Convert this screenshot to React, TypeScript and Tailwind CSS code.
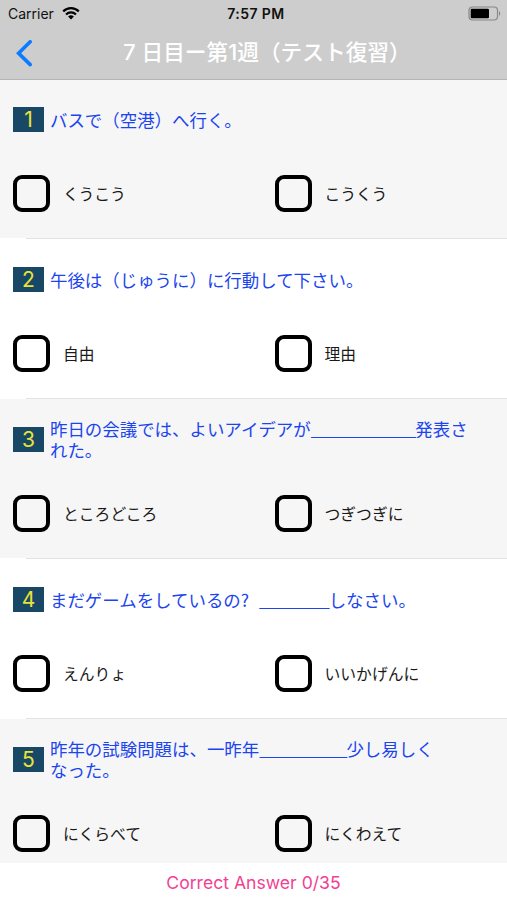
import { Fragment, useState } from "react";

interface Question {
  id: number;
  parts: string[];
  blank?: string;
  options: string[];
}

// questions for week 1, day 7

const questions: Question[] = [
  {
    id: 1,
    parts: ["バスで（空港）へ行く。"],
    options: ["くうこう", "こうくう"],
  },
  {
    id: 2,
    parts: ["午後は（じゅうに）に行動して下さい。"],
    options: ["自由", "理由"],
  },
  {
    id: 3,
    parts: ["昨日の会議では、よいアイデアが", "発表さ\nれた。"],
    blank: "____________",
    options: ["ところどころ", "つぎつぎに"],
  },
  {
    id: 4,
    parts: ["まだゲームをしているの? ", "しなさい。"],
    blank: "________",
    options: ["えんりょ", "いいかげんに"],
  },
  {
    id: 5,
    parts: ["昨年の試験問題は、一昨年", "少し易しく\nなった。"],
    blank: "__________",
    options: ["にくらべて", "にくわえて"],
  },
];

export default function App() {
  const [selected, setSelected] = useState<Record<number, number>>({});

  return (
    <div className="flex h-[900px] w-[507px] flex-col overflow-hidden bg-white font-['Inter','Noto_Sans_CJK_JP',sans-serif]">
      <Header />
      <main className="-mt-px h-[784px] shrink-0 overflow-hidden">
        {questions.map((question) => (
          <QuestionRow
            key={question.id}
            question={question}
            selected={selected[question.id]}
            onSelect={(index) =>
              setSelected({ ...selected, [question.id]: index })
            }
          />
        ))}
      </main>
      <footer className="flex h-[37px] items-center justify-center pt-1 text-[17.6px] text-[#f23f93]">
        Correct Answer 0/35
      </footer>
    </div>
  );
}

const Header = () => {
  return (
    <header className="relative z-10 h-20 shrink-0 border-b border-[#b4b4b4] bg-[#cdcdcd]">
      {/* status bar */}
      <div className="grid h-[27px] grid-cols-3 items-center pr-[6px] pl-2 text-[14px] text-[#111]">
        <div className="flex items-center gap-2">
          <span>Carrier</span>
          <svg width="18" height="13" viewBox="0 0 18 13" fill="none">
            <path d="M1.2 4.4a11 11 0 0 1 15.6 0" stroke="#000" strokeWidth="2.2" />
            <path d="M4 7.4a7.1 7.1 0 0 1 10 0" stroke="#000" strokeWidth="2.1" />
            <path d="M9 12.6 6.1 9.6a4.1 4.1 0 0 1 5.8 0Z" fill="#000" />
          </svg>
        </div>
        <span className="pl-[3px] text-center font-semibold tracking-[0.03em]">
          7:57 PM
        </span>
        <div className="flex items-center justify-end">
          <svg width="33" height="15" viewBox="0 0 33 15">
            <rect x="1" y="1" width="28.5" height="13" rx="3.5" fill="none" stroke="#888" strokeWidth="1.2" />
            <rect x="2.7" y="2.8" width="18.3" height="9.4" rx="1.2" fill="#000" />
            <path d="M31 5.2c1.6.5 1.6 4.1 0 4.6Z" fill="#888" />
          </svg>
        </div>
      </div>

      {/* nav bar */}
      <div className="grid h-[52px] grid-cols-[40px_1fr_16px] items-center">
        <button className="pl-4" aria-label="Back">
          <svg width="17" height="27" viewBox="0 0 17 27" fill="none">
            <path d="M14.2 1.8 2.6 13.2l11.6 11.4" stroke="#0a7cff" strokeWidth="3.6" strokeLinecap="round" strokeLinejoin="miter" />
          </svg>
        </button>
        <h1 className="pl-[3px] text-center text-[21.7px] leading-none font-medium whitespace-nowrap text-white">
          7 日目ー第1週（テスト復習）
        </h1>
      </div>
    </header>
  );
};

interface QuestionRowProps {
  question: Question;
  selected?: number;
  onSelect: (index: number) => void;
}

const QuestionRow = ({ question, selected, onSelect }: QuestionRowProps) => {
  return (
    <section className="h-40">
      <div
        className={`h-[159px] pt-[19px] ${
          question.id % 2 ? "bg-[#f6f6f6]" : "bg-white"
        }`}
      >
        <div className="flex h-[42px] items-center pl-[13px]">
          <div className="flex h-[25px] w-[31px] shrink-0 items-center justify-center bg-[#194866] text-[21px] leading-none text-[#e8e337]">
            {question.id}
          </div>
          <p className="ml-[6px] font-['Noto_Sans_CJK_JP',sans-serif] text-[17.45px] leading-[21px] whitespace-pre text-[#1c45ee]">
            {question.parts.map((part, index) => (
              <Fragment key={index}>
                {index > 0 && (
                  <span className="tracking-[-0.059em]">{question.blank}</span>
                )}
                <span className="[word-spacing:6px]">{part}</span>
              </Fragment>
            ))}
          </p>
        </div>

        {/* answers */}
        <div className="mt-[35px] grid grid-cols-[261.5px_1fr] pl-[13px]">
          {question.options.map((option, index) => (
            <label key={option} className="flex items-center gap-[13px]">
              <input
                type="checkbox"
                checked={selected === index}
                onChange={() => onSelect(index)}
                className="size-[37px] appearance-none rounded-[9px] border-4 border-black checked:bg-[#194866]"
              />
              <span className="font-['Noto_Sans_CJK_JP',sans-serif] text-[15.8px] leading-none text-[#1a1a1a]">
                {option}
              </span>
            </label>
          ))}
        </div>
      </div>
      <div className="ml-[26px] h-px bg-[#e3e3e3]" />
    </section>
  );
};
